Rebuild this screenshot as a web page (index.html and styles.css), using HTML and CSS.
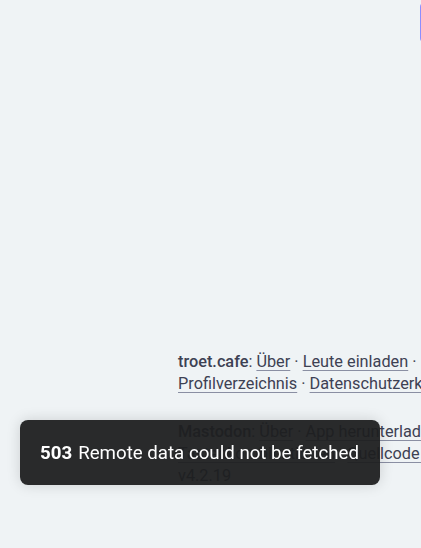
FILE: index.html
```html
<!DOCTYPE html>
<html lang="de">
<head>
<meta charset="utf-8">
<link rel="stylesheet" href="styles.css">
</head>
<body>
<div class="layout">
  <div class="spacer"></div>
  <div class="column">
    <div class="top">
      <div class="compose-btn"></div>
    </div>
    <div class="link-footer">
      <p><strong>troet.cafe</strong>: <a href="#">Über</a> · <a href="#">Leute einladen</a> · <a href="#">Profilverzeichnis</a> · <a href="#">Datenschutzerklärung</a></p>
      <p><strong>Mastodon</strong>: <a href="#">Über</a> · <a href="#">App herunterladen</a> · <a href="#">Tastenkombinationen</a> · <a href="#">Quellcode anzeigen</a> · <span class="version">v4.2.19</span></p>
    </div>
  </div>
</div>
<div class="toast"><strong>503</strong> Remote data could not be fetched</div>
</body>
</html>
```
FILE: styles.css
```css
html, body {
  margin: 0;
  padding: 0;
  background: #eff3f5;
  overflow: hidden;
  width: 421px;
  height: 548px;
}
body {
  font-family: Roboto, "Noto Sans", sans-serif;
  color: #3d4153;
}
.layout {
  display: flex;
  width: 600px;
}
.spacer {
  width: 178px;
  flex: none;
}
.column {
  width: 330px;
  flex: none;
  display: flex;
  flex-direction: column;
}
.top {
  height: 351px;
  padding-top: 3px;
  box-sizing: border-box;
}
.compose-btn {
  margin-left: 242px;
  width: 40px;
  height: 39px;
  background: #8c8dff;
  border-radius: 4px;
}
.link-footer {
  font-size: 16.3px;
  line-height: 22px;
}
.link-footer p {
  margin: 0 0 26px;
}
.link-footer strong {
  font-weight: 500;
}
.link-footer a {
  color: #3d4153;
  text-decoration: underline;
  text-decoration-color: #8a8fa3;
  text-underline-offset: 3px;
}
.toast {
  position: fixed;
  left: 20px;
  top: 420px;
  width: 360px;
  height: 65px;
  box-sizing: border-box;
  padding: 0 20px;
  display: flex;
  align-items: center;
  gap: 6px;
  background: rgba(30, 31, 32, 0.95);
  color: #ffffff;
  border-radius: 8px;
  font-family: Roboto, "Noto Sans", sans-serif;
  font-size: 18.7px;
  box-shadow: 0 0 14px rgba(0, 0, 0, 0.15);
}
.toast strong {
  font-weight: 700;
}
```
